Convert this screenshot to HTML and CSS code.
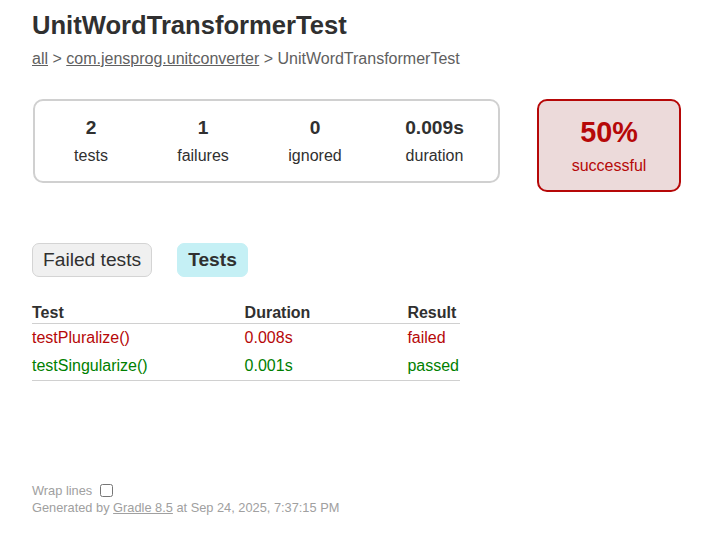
FILE: index.html
```html
<!DOCTYPE html>
<html lang="en">
<head>
<meta charset="utf-8">
<title>Test results - UnitWordTransformerTest</title>
<link rel="stylesheet" href="styles.css">
</head>
<body>
<div class="content">
  <h1 class="title">UnitWordTransformerTest</h1>
  <div class="breadcrumbs"><a href="#">all</a> &gt; <a href="#">com.jensprog.unitconverter</a> &gt; UnitWordTransformerTest</div>
  <div class="summary">
    <div class="summary-group">
      <div class="info-box"><div class="counter">2</div><p>tests</p></div>
      <div class="info-box"><div class="counter">1</div><p>failures</p></div>
      <div class="info-box"><div class="counter">0</div><p>ignored</p></div>
      <div class="info-box duration"><div class="counter">0.009s</div><p>duration</p></div>
    </div>
    <div class="success-rate failures"><div class="percent">50%</div><p>successful</p></div>
  </div>
  <ul class="tab-links">
    <li><a href="#tab0">Failed tests</a></li>
    <li class="selected"><a href="#tab1">Tests</a></li>
  </ul>
  <div class="tab">
    <table class="tests">
      <thead>
        <tr><th>Test</th><th>Duration</th><th>Result</th></tr>
      </thead>
      <tbody>
        <tr class="failures"><td>testPluralize()</td><td>0.008s</td><td>failed</td></tr>
        <tr class="success"><td>testSingularize()</td><td>0.001s</td><td>passed</td></tr>
      </tbody>
    </table>
  </div>
  <div class="footer">
    <div class="wrap-toggle"><label for="wrap">Wrap lines</label> <input id="wrap" type="checkbox"></div>
    <div>Generated by <a href="#">Gradle 8.5</a> at Sep 24, 2025, 7:37:15 PM</div>
  </div>
</div>
</body>
</html>
```

FILE: styles.css
```css
html, body {
  margin: 0;
  padding: 0;
}
body {
  font-family: "Liberation Sans", Arial, sans-serif;
  font-size: 16px;
  color: #303030;
  background: #ffffff;
}
a, a:visited {
  color: #303030;
}
.content {
  padding: 11px 32px 20px;
}
.title {
  font-size: 25.6px;
  font-weight: bold;
  margin: 0 0 10px;
  white-space: nowrap;
}
.breadcrumbs, .breadcrumbs a {
  color: #606060;
}
.summary {
  display: flex;
  align-items: flex-start;
  margin: 31px 0 0;
  padding-left: 1px;
}
.summary-group {
  display: flex;
  flex-shrink: 0;
  gap: 2px;
  padding: 1px;
  border: solid 2px #d0d0d0;
  border-radius: 10px;
}
.info-box {
  width: 110px;
  padding: 15px 0;
  text-align: center;
}
.info-box.duration {
  width: 125px;
}
.info-box p, .success-rate p {
  margin: 0;
}
.counter, .percent {
  font-size: 19.2px;
  font-weight: bold;
  margin-bottom: 8px;
}
.success-rate {
  flex-shrink: 0;
  width: 140px;
  margin-left: 37px;
  padding: 15px 0;
  text-align: center;
  border: solid 2px #b60808;
  border-radius: 10px;
  background-color: #ecdada;
}
.success-rate .percent {
  font-size: 28.8px;
}
.failures, .failures a {
  color: #b60808;
}
.success, .success a {
  color: #008000;
}
.tab-links {
  display: flex;
  list-style: none;
  margin: 41px 0 16px;
  padding: 10px 0;
}
.tab-links li {
  padding: 5px 10px;
  margin-right: 25px;
  border: solid 1px #d4d4d4;
  border-radius: 7px;
  background-color: #f0f0f0;
}
.tab-links li.selected {
  background-color: #c5f0f5;
  border-color: #c5f0f5;
}
.tab-links a {
  font-size: 19.2px;
  display: block;
  text-decoration: none;
}
.tab-links li.selected a {
  font-weight: bold;
}
.tests {
  min-width: 350px;
  border-collapse: collapse;
  border-bottom: solid 1px #d0d0d0;
}
.tests th {
  text-align: left;
  white-space: nowrap;
  padding: 1px 1px 1px 96px;
  border-bottom: solid 1px #d0d0d0;
}
.tests td {
  white-space: nowrap;
  padding: 5px 1px 5px 96px;
}
.tests th:first-child, .tests td:first-child {
  padding-left: 0;
}
.footer {
  margin-top: 100px;
  font-size: 12.8px;
  color: #a0a0a0;
}
.footer a {
  color: #a0a0a0;
}
.wrap-toggle label, .wrap-toggle input {
  vertical-align: middle;
}
.wrap-toggle input {
  margin: 3px 3px 3px 4px;
}
```
